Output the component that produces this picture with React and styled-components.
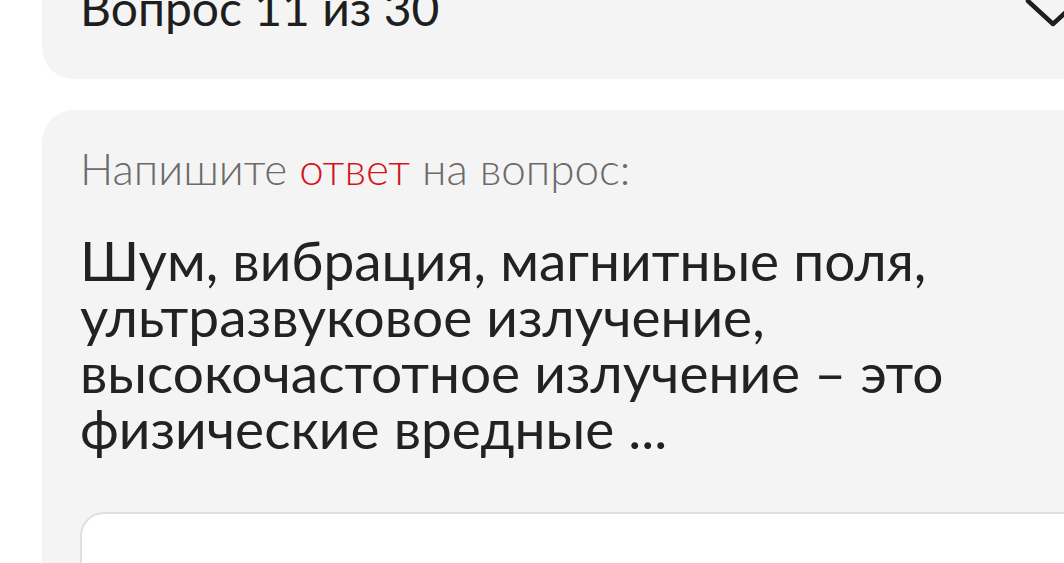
import React from "react";
import styled, { createGlobalStyle } from "styled-components";

const Global = createGlobalStyle`
  *, *::before, *::after { box-sizing: border-box; }
  html, body { margin: 0; padding: 0; background: #fff; overflow: hidden; }
  body { font-family: Lato, "Noto Sans", sans-serif; color: #1e1e1e; }
`;

const Page = styled.div`
  width: 1148px;
  margin-top: -60px;
  padding-left: 42px;
  display: flex;
  flex-direction: column;
  gap: 31px;
`;

const Card = styled.section`
  background: #f4f4f4;
  border-radius: 32px;
  padding: ${(p) => p.$pad};
`;

const Header = styled.div`
  display: flex;
  align-items: center;
  justify-content: space-between;
`;

const Counter = styled.h2`
  margin: 0;
  font-size: 48px;
  font-weight: 400;
  line-height: 56px;
  color: #1e1e1e;
`;

const Chevron = styled.svg`
  width: 56px;
  height: 30px;
  margin-top: 10px;
  display: block;
  flex-shrink: 0;
`;

const Prompt = styled.p`
  margin: 0;
  font-size: 44px;
  font-weight: 300;
  line-height: 52px;
  color: #6b6b6b;
`;

const Accent = styled.span`
  color: #d7141a;
`;

const Question = styled.h1`
  margin: 38px 0 0;
  width: 920px;
  font-size: 55px;
  font-weight: 400;
  line-height: 56px;
  color: #222;
`;

const AnswerBox = styled.div`
  margin-top: 56px;
  height: 120px;
  background: #fff;
  border: 2px solid #e0e0e0;
  border-radius: 24px;
`;

export default function App() {
  return (
    <>
      <Global />
      <Page>
        <Card $pad="40px 67px 43px 38px">
          <Header>
            <Counter>Вопрос 11 из 30</Counter>
            <Chevron viewBox="0 0 56 30" fill="none">
              <path d="M3 3 L28 26 L53 3" stroke="#1e1e1e" strokeWidth="4.5" strokeLinecap="round" strokeLinejoin="round" />
            </Chevron>
          </Header>
        </Card>
        <Card $pad="32px 38px 0">
          <Prompt>
            Напишите <Accent>ответ</Accent> на вопрос:
          </Prompt>
          <Question>
            Шум, вибрация, магнитные поля, ультразвуковое излучение, высокочастотное излучение – это физические вредные ...
          </Question>
          <AnswerBox />
        </Card>
      </Page>
    </>
  );
}
